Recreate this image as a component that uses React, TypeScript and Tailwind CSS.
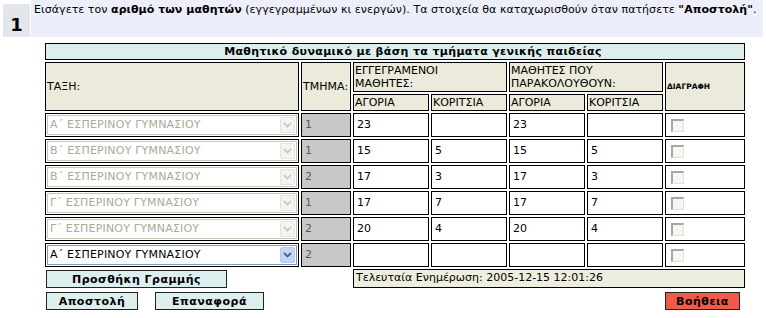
import React from 'react';

type Row = {
  taxi: string;
  tmima: string;
  vals: string[];
  active?: boolean;
};

const rows: Row[] = [
  { taxi: 'Α΄ ΕΣΠΕΡΙΝΟΥ ΓΥΜΝΑΣΙΟΥ', tmima: '1', vals: ['23', '', '23', ''] },
  { taxi: 'Β΄ ΕΣΠΕΡΙΝΟΥ ΓΥΜΝΑΣΙΟΥ', tmima: '1', vals: ['15', '5', '15', '5'] },
  { taxi: 'Β΄ ΕΣΠΕΡΙΝΟΥ ΓΥΜΝΑΣΙΟΥ', tmima: '2', vals: ['17', '3', '17', '3'] },
  { taxi: 'Γ΄ ΕΣΠΕΡΙΝΟΥ ΓΥΜΝΑΣΙΟΥ', tmima: '1', vals: ['17', '7', '17', '7'] },
  { taxi: 'Γ΄ ΕΣΠΕΡΙΝΟΥ ΓΥΜΝΑΣΙΟΥ', tmima: '2', vals: ['20', '4', '20', '4'] },
  { taxi: 'Α΄ ΕΣΠΕΡΙΝΟΥ ΓΥΜΝΑΣΙΟΥ', tmima: '2', vals: ['', '', '', ''], active: true },
];

const head = 'bg-[#ebeadb] border border-black flex items-center px-[1px] leading-[13px]';

const Chevron = ({ color }: { color: string }) => (
  <svg width="9" height="6" viewBox="0 0 9 6">
    <path d="M1 1 L4.5 4.5 L8 1" fill="none" stroke={color} strokeWidth="1.8" />
  </svg>
);

const Select = ({ label, active }: { label: string; active?: boolean }) => (
  <div
    className={`m-[1px] h-[20px] flex items-center border ${
      active ? 'border-[#7f9db9] text-black' : 'border-[#c9c7ba] text-[#aca899]'
    }`}
  >
    <span className="flex-1 pl-[2px] whitespace-nowrap tracking-[0.2px]">{label}</span>
    <span
      className={`w-[15px] h-[16px] mr-[1px] flex items-center justify-center rounded-[2px] ${
        active ? 'bg-[#c6d5f7] border border-[#b7c9f0]' : 'bg-[#f4f4f0] border border-[#e4e4dc]'
      }`}
    >
      <Chevron color={active ? '#4d6185' : '#c9c9c9'} />
    </span>
  </div>
);

const Checkbox = () => (
  <div className="ml-[5px] mt-[5px] w-[13px] h-[13px] border-t-2 border-l-2 border-r border-b border-t-[#a8a8a2] border-l-[#a8a8a2] border-r-[#e2e2dc] border-b-[#e2e2dc] bg-[#f6f6f3]" />
);

export default function App() {
  return (
    <div className="w-[766px] h-[318px] bg-white overflow-hidden font-['DejaVu_Sans',sans-serif] text-[11px] text-black">
      {/* Step banner */}
      <div className="flex h-[37px] pr-[3px]">
        <div className="ml-[3px] mt-[4px] w-[27px] bg-[#e4e6ee] flex items-end justify-center pb-[3px]">
          <span className="text-[18px] font-bold leading-none">1</span>
        </div>
        <div className="ml-[1px] flex-1 bg-[#eceef9] pl-[3px] pt-[2px] whitespace-nowrap tracking-[0.05px]">
          Εισάγετε τον <b>αριθμό των μαθητών</b> (εγγεγραμμένων κι ενεργών). Τα στοιχεία θα καταχωρισθούν
          όταν πατήσετε <b>"Αποστολή"</b>.
        </div>
      </div>

      <div className="ml-[45px] mt-[6px] w-[700px]">
        <div className="h-[17px] border border-black bg-[#ddeeee] font-bold text-center pl-[36px] leading-[15px] tracking-[0.35px]">
          Μαθητικό δυναμικό με βάση τα τμήματα γενικής παιδείας
        </div>

        <div className="mt-[2px] grid grid-cols-[254px_50px_76px_76px_76px_76px_80px] grid-rows-[30px_17px] auto-rows-[24px] gap-[2px]">
          <div className={`${head} row-span-2`}>ΤΑΞΗ:</div>
          <div className={`${head} row-span-2`}>ΤΜΗΜΑ:</div>
          <div className={`${head} col-span-2`}>
            ΕΓΓΕΓΡΑΜΕΝΟΙ
            <br />
            ΜΑΘΗΤΕΣ:
          </div>
          <div className={`${head} col-span-2`}>
            ΜΑΘΗΤΕΣ ΠΟΥ
            <br />
            ΠΑΡΑΚΟΛΟΥΘΟΥΝ:
          </div>
          <div className={`${head} row-span-2 text-[7.5px] font-bold`}>ΔΙΑΓΡΑΦΗ</div>
          <div className={head}>ΑΓΟΡΙΑ</div>
          <div className={head}>ΚΟΡΙΤΣΙΑ</div>
          <div className={head}>ΑΓΟΡΙΑ</div>
          <div className={head}>ΚΟΡΙΤΣΙΑ</div>

          {rows.map((r, i) => (
            <React.Fragment key={i}>
              <div className="border border-black bg-white">
                <Select label={r.taxi} active={r.active} />
              </div>
              <div className="border border-black bg-[#c8c8c8] text-[#5a5a5a] flex items-center pl-[3px]">
                {r.tmima}
              </div>
              {r.vals.map((v, j) => (
                <div key={j} className="border border-black bg-white flex items-center pl-[3px]">
                  {v}
                </div>
              ))}
              <div className="border border-black bg-white">
                <Checkbox />
              </div>
            </React.Fragment>
          ))}
        </div>

        {/* Footer row */}
        <div className="mt-[2px] flex">
          <button className="ml-[1px] mt-[1px] w-[181px] h-[18px] border border-[#222] bg-[#ddeeee] font-bold tracking-[0.5px] leading-none">
            Προσθήκη Γραμμής
          </button>
          <div className="ml-[126px] w-[392px] h-[19px] border border-black bg-[#eeeedf] flex items-center pl-[2px]">
            Τελευταία Ενημέρωση: 2005-12-15 12:01:26
          </div>
        </div>

        <div className="mt-[4px] flex items-center">
          <button className="ml-[1px] w-[92px] h-[18px] border border-[#222] bg-[#ddeeee] font-bold tracking-[0.5px] leading-none">
            Αποστολή
          </button>
          <button className="ml-[17px] w-[109px] h-[18px] border border-[#222] bg-[#ddeeee] font-bold tracking-[0.5px] leading-none">
            Επαναφορά
          </button>
          <button className="ml-auto mr-[5px] w-[75px] h-[18px] border border-[#222] bg-[#f05a48] font-bold tracking-[0.5px] leading-none">
            Βοήθεια
          </button>
        </div>
      </div>
    </div>
  );
}
